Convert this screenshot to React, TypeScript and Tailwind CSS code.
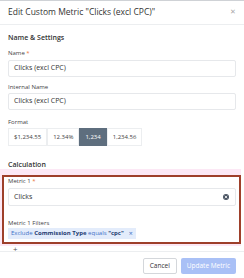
import React from "react";

const font = { fontFamily: '"Open Sans", "Noto Sans", sans-serif' };

function Label({ text, required }: { text: string; required?: boolean }) {
  return (
    <div className="text-[6px] leading-[10px] text-[#444]">
      {text}
      {required && <span className="text-[#e8743b]"> *</span>}
    </div>
  );
}

function TextInput({ value }: { value: string }) {
  return (
    <div className="flex h-[17px] items-center rounded-[2px] border border-[#e6e8eb] bg-white px-[5px] text-[7px] text-[#333]">
      {value}
    </div>
  );
}

const formats = ["$1,234.55", "12.34%", "1,234", "1,234.56"];

export default function App() {
  return (
    <div className="h-[278px] w-[244px] overflow-hidden bg-white" style={font}>
      {/* Header */}
      <div className="flex h-[25px] items-center justify-between border-t border-b border-t-[#cfd2d6] border-b-[#eceef0] px-[8px]">
        <span className="text-[8.5px] text-[#333]">Edit Custom Metric "Clicks (excl CPC)"</span>
        <span className="text-[7px] text-[#aaa]">✕</span>
      </div>

      <div className="px-[8px]">
        <div className="mt-[8px] text-[7px] font-semibold leading-[10px] text-[#333]">Name &amp; Settings</div>

        <div className="mt-[5px]">
          <Label text="Name" required />
        </div>
        <div className="mt-[2px]">
          <TextInput value="Clicks (excl CPC)" />
        </div>

        <div className="mt-[5px]">
          <Label text="Internal Name" />
        </div>
        <div className="mt-[1px]">
          <TextInput value="Clicks (excl CPC)" />
        </div>

        <div className="mt-[7px]">
          <Label text="Format" />
        </div>
        <div className="mt-[1px] flex">
          {formats.map((f) => (
            <div
              key={f}
              className={
                f === "1,234"
                  ? "flex h-[18px] items-center bg-[#5e6e7e] px-[6px] text-[6px] text-white"
                  : "flex h-[18px] items-center border border-[#eceef0] bg-white px-[5px] text-[6px] text-[#444]"
              }
            >
              {f}
            </div>
          ))}
        </div>

        <div className="mt-[15px] text-[7px] font-semibold leading-[8px] text-[#333]">Calculation</div>

        {/* Highlighted metric block */}
        <div className="-ml-[8px] -mr-[5px] bg-[#fce8f5] pt-[6px] pb-[2px]">
          <div className="ml-[2px] border-2 border-[#9e3f2a] bg-white pl-[4px] pr-[3px] pb-[3px]">
            <div className="text-[6px] leading-[8px] text-[#444]">
              Metric 1<span className="text-[#e8743b]"> *</span>
            </div>
            <div className="mt-[3px]">
              <div className="flex h-[18px] items-center justify-between rounded-[2px] border border-[#e6e8eb] bg-white px-[5px] text-[7px] text-[#333]">
                <span>Clicks</span>
                <svg width="6" height="6" viewBox="0 0 12 12" className="mr-[1px]">
                  <circle cx="6" cy="6" r="6" fill="#4b5563" />
                  <path d="M4 4 L8 8 M8 4 L4 8" stroke="#fff" strokeWidth="1.6" strokeLinecap="round" />
                </svg>
              </div>
            </div>
            <div className="mt-[12px] text-[6px] leading-[10px] text-[#444]">Metric 1 Filters</div>
            <div className="flex">
              <div className="flex h-[11px] items-center gap-[3px] bg-[#e3ecfb] px-[3px] text-[6px] text-[#3d6fc6]">
                <span>
                  Exclude <b className="font-bold text-[#1f3c72]">Commission Type</b> equals{" "}
                  <b className="font-bold text-[#1f3c72]">"cpc"</b>
                </span>
                <span className="ml-[2px] text-[7px] leading-none">×</span>
              </div>
            </div>
          </div>
        </div>

        <div className="h-[5px] pl-[5px] text-[8px] leading-[5px] text-[#555]">+</div>
      </div>

      {/* Footer */}
      <div className="flex justify-end gap-[4px] border-t border-[#eceef0] px-[8px] pt-[6px]">
        <div className="flex h-[16px] items-center rounded-[2px] border border-[#d4d7db] bg-white px-[6px] text-[6.5px] text-[#333]">
          Cancel
        </div>
        <div className="flex h-[16px] items-center rounded-[2px] bg-[#a9c0f6] px-[6px] text-[6.5px] text-white">
          Update Metric
        </div>
      </div>
    </div>
  );
}
